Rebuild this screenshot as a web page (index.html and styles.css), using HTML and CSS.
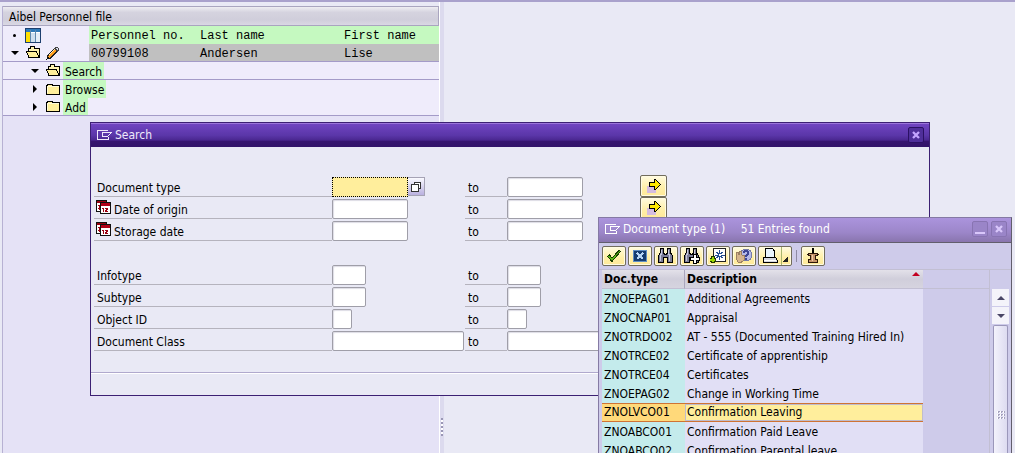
FILE: index.html
```html
<!DOCTYPE html>
<html lang="en">
<head>
<meta charset="utf-8">
<title>Aibel Personnel file</title>
<link rel="stylesheet" href="styles.css">
</head>
<body>
<svg class="defs" width="0" height="0" aria-hidden="true">
  <symbol id="window-mark" viewBox="0 0 16 12"><path d="M11 1.500H.5V10.500H11V7.500M5.500 7.500V3.500H14.500L10.500 7.500H5" fill="none" stroke="currentColor"/></symbol>
  <symbol id="folder-closed" viewBox="0 0 15 13"><path d="M.5 2.500H1.500V1.500H6.500V2.500H13.500V11.500H.5Z" fill="#ffef9b" stroke="#000"/><path d="M1.500 10V3.500H12.500" fill="none" stroke="#fffbd8"/></symbol>
  <symbol id="folder-open" viewBox="0 0 15 13"><path d="M2.500 5V2.500H4.500V.5H8.500V2.500H13.500V11.500H2.500" fill="#fff3b0" stroke="#000"/><path d="M.5 5.500H10.500L13 11.500H3Z" fill="#ffef9b" stroke="#000"/></symbol>
  <symbol id="calendar" viewBox="0 0 15 14"><path d="M.5.500H10.500V11.500H.5Z" fill="#fff" stroke="#111"/><path d="M1 1H10V3H1Z" fill="#9a0010"/><path d="M2 5.500H4M3.500 5V10M2 8.500H4" stroke="#9a0010"/><path d="M4.500 2.500H14.500V13.500H4.500Z" fill="#fff" stroke="#111"/><path d="M5 3H14V6H5Z" fill="#b00018"/><path d="M6 8.500H7.500V12M9 8.500H11.500V9.500H10.500V10.500H9.500V11.500H12" fill="none" stroke="#9a0010"/></symbol>
  <symbol id="arrow-multi" viewBox="0 0 16 16"><path d="M1 8H10V15H1Z" fill="#d4bce0"/><path d="M3.500 4.500H8.500V1.500H9.500L14.500 6.500 9.500 11.500H8.500V8.500H3.500Z" fill="#ffe800" stroke="#000"/></symbol>
  <symbol id="close" viewBox="0 0 8 8"><path d="M1 1 7 7M7 1 1 7" stroke="currentColor" stroke-width="2.300"/></symbol>
  <symbol id="binoculars" viewBox="0 0 16 16"><path d="M2.500.500H5.500V4.500L6.500 6.500H8.500L9.500 4.500V.5H12.500V4.500L14.500 8V14.500H9.500V9.500H5.500V14.500H.5V8L2.500 4.500Z" fill="#7c7d98" stroke="#000"/><path d="M3.500 2V5L2.500 8V13M10.500 2V5L11.500 8V13" fill="none" stroke="#c6c8dc"/></symbol>
</svg>

<main class="desktop">
  <section class="tree-panel">
    <h1 class="tree-title">Aibel Personnel file</h1>
    <div class="tree-row">
      <div class="tree-node"><span class="dot"></span>
        <svg class="icon-table" width="17" height="15" viewBox="0 0 17 15"><path d="M.5.500H15.500V14.500H.5Z" fill="#fff" stroke="#1d3f6e"/><path d="M1 1H15V4H1Z" fill="#2f7ab8"/><path d="M1 4H5V14H1Z" fill="#ffdf00"/><path d="M6 5H10V14H6Z" fill="#cfe0ef"/><path d="M11 5H15V14H11Z" fill="#e5eef7"/><path d="M5.500 2V14M10.500 2V14" stroke="#5f88ad"/></svg>
      </div>
      <div class="tree-data head"><span>Personnel no.</span><span>Last name</span><span>First name</span></div>
    </div>
    <div class="tree-row ruled">
      <div class="tree-node"><span class="caret down"></span>
        <svg width="15" height="13"><use href="#folder-open"/></svg>
        <svg class="icon-pencil" width="14" height="14" viewBox="0 0 14 14"><path d="M1 13 2 9.500 9.500 2 12 4.500 4.500 12Z" fill="#ff9e1b" stroke="#222"/><path d="M2.500 9.500 9.500 2.500" stroke="#ffe2a8"/><path d="M9 2.500 11 .8 13.200 3 11.500 5Z" fill="#d9dcec" stroke="#444"/><path d="M0 14 1.500 10.500 3.500 12.500Z" fill="#111"/></svg>
      </div>
      <div class="tree-data selected"><span>00799108</span><span>Andersen</span><span>Lise</span></div>
    </div>
    <div class="tree-row child ruled"><span class="caret down"></span><svg width="15" height="13"><use href="#folder-open"/></svg><button class="tree-label">Search</button></div>
    <div class="tree-row child"><span class="caret right"></span><svg width="15" height="13"><use href="#folder-closed"/></svg><button class="tree-label">Browse</button></div>
    <div class="tree-row child ruled"><span class="caret right"></span><svg width="15" height="13"><use href="#folder-closed"/></svg><button class="tree-label">Add</button></div>
  </section>
  <div class="splitter"><span class="grip"></span></div>
  <div class="work-area"></div>
</main>

<section class="window search-window" aria-label="Search">
  <header class="titlebar">
    <svg width="16" height="12"><use href="#window-mark"/></svg>
    <h2>Search</h2>
    <button class="win-button" aria-label="Close"><svg width="8" height="8"><use href="#close"/></svg></button>
  </header>
  <form class="criteria">
    <div class="criterion">
      <label class="name" for="doctype">Document type</label>
      <div class="from"><input id="doctype" class="date focused"><button type="button" class="match" aria-label="Possible entries"><svg width="12" height="12" viewBox="0 0 12 12"><path d="M4.500 1.500H10.500V7.500H4.500Z" fill="#fff" stroke="#333"/><path d="M1.500 3.500H8.500V10.500H1.500Z" fill="#fff" stroke="#333"/></svg></button></div>
      <label class="to" for="doctype-to">to</label>
      <div class="until"><input id="doctype-to" class="date"></div>
      <button type="button" class="gold multi" aria-label="Multiple selection for document type"><svg width="16" height="16"><use href="#arrow-multi"/></svg></button>
    </div>
    <div class="criterion">
      <label class="name with-icon" for="origin"><svg width="15" height="14"><use href="#calendar"/></svg>Date of origin</label>
      <div class="from"><input id="origin" class="date"></div>
      <label class="to" for="origin-to">to</label>
      <div class="until"><input id="origin-to" class="date"></div>
      <button type="button" class="gold multi" aria-label="Multiple selection for date of origin"><svg width="16" height="16"><use href="#arrow-multi"/></svg></button>
    </div>
    <div class="criterion">
      <label class="name with-icon" for="storage"><svg width="15" height="14"><use href="#calendar"/></svg>Storage date</label>
      <div class="from"><input id="storage" class="date"></div>
      <label class="to" for="storage-to">to</label>
      <div class="until"><input id="storage-to" class="date"></div>
    </div>
    <div class="criterion group-start">
      <label class="name" for="infotype">Infotype</label>
      <div class="from"><input id="infotype" class="short"></div>
      <label class="to" for="infotype-to">to</label>
      <div class="until"><input id="infotype-to" class="short"></div>
    </div>
    <div class="criterion">
      <label class="name" for="subtype">Subtype</label>
      <div class="from"><input id="subtype" class="short"></div>
      <label class="to" for="subtype-to">to</label>
      <div class="until"><input id="subtype-to" class="short"></div>
    </div>
    <div class="criterion">
      <label class="name" for="object">Object ID</label>
      <div class="from"><input id="object" class="tiny"></div>
      <label class="to" for="object-to">to</label>
      <div class="until"><input id="object-to" class="tiny"></div>
    </div>
    <div class="criterion">
      <label class="name" for="class">Document Class</label>
      <div class="from"><input id="class" class="long"></div>
      <label class="to" for="class-to">to</label>
      <div class="until"><input id="class-to" class="long"></div>
    </div>
  </form>
  <footer class="window-footer"></footer>
</section>

<section class="window list-window" aria-label="Document type">
  <header class="titlebar">
    <svg width="16" height="12"><use href="#window-mark"/></svg>
    <h2>Document type (1) <span class="count">51 Entries found</span></h2>
    <button class="win-button" aria-label="Minimize"><span class="dash"></span></button>
    <button class="win-button" aria-label="Close"><svg width="8" height="8"><use href="#close"/></svg></button>
  </header>
  <div class="toolbar">
    <button class="gold" aria-label="Continue"><svg width="16" height="16" viewBox="0 0 16 16"><path d="M1.500 8.500 3.500 7 6 10 13 2.500 14.500 3.500 6 13.500Z" fill="#5cb615" stroke="#173d00"/></svg></button>
    <button class="gold" aria-label="Cancel"><svg width="16" height="16" viewBox="0 0 16 16"><path d="M1.500 2.500H14.500V13.500H1.500Z" fill="#153d70" stroke="#5f8fc4"/><path d="M5 5 11 11M11 5 5 11" stroke="#b5d6f5" stroke-width="2"/></svg></button>
    <button class="gold" aria-label="Find"><svg width="16" height="16"><use href="#binoculars"/></svg></button>
    <button class="gold" aria-label="Find next"><svg width="16" height="16" viewBox="0 0 16 16"><use href="#binoculars" width="16" height="16"/><path d="M9.500 6.500H12.500V9.500H15.500V12.500H12.500V15.500H9.500V12.500H6.500V9.500H9.500Z" fill="#fff" stroke="#000"/></svg></button>
    <button class="gold" aria-label="Add to favorites"><svg width="16" height="16" viewBox="0 0 16 16"><path d="M3.500.500H15.500V13.500H3.500Z" fill="#fff" stroke="#222"/><path d="M9.500 2V12M5 7H14.500M6.500 4 12.500 10M12.500 4 6.500 10" stroke="#244f91"/><path d="M9 6H11V8H9Z" fill="#fff"/><path d="M2.500 8V15M-1 11.500H6" stroke="#213800" stroke-width="4"/><path d="M2.500 9V14M0 11.500H5" stroke="#9bd800" stroke-width="2"/></svg></button>
    <button class="gold" aria-label="Help"><svg width="18" height="16" viewBox="0 0 18 16"><circle cx="11" cy="7" r="6" fill="#b5b9e7" stroke="#777ba8"/><path d="M8.500 5Q9 3 11 3T13 5.500Q13 6.500 11 7.500V9M11 10V12" fill="none" stroke="#3e4694" stroke-width="2"/><path d="M1 5 3 4 4 7 4.500 3 6 3 6.500 7 9 7.500 9 12 6.500 14H3L1 10Z" fill="#d6b58c" stroke="#9c8062"/></svg></button>
    <button class="gold split" aria-label="Print"><svg width="16" height="16" viewBox="0 0 16 16"><path d="M3.500.500H10.500L12.500 3V9.500H3.500Z" fill="#e9f4fd" stroke="#000"/><path d="M1.500 9.500H13.500L15 12V14.500H1V11Z" fill="#d5d7df" stroke="#000"/><path d="M2 12H14" stroke="#fff"/></svg><span class="corner"></span></button>
    <span class="separator"></span>
    <button class="gold" aria-label="Hold list"><svg width="14" height="16" viewBox="0 0 14 16"><path d="M7 0V6" stroke="#000" stroke-width="2"/><path d="M2.500 5.500H11.500V7.500H9.500V11.500H11.500V14.500H2.500V11.500H4.500V7.500H2.500Z" fill="#c6936b" stroke="#2b1708"/><path d="M1 6.500H3M11 6.500H13" stroke="#2b1708"/><path d="M6.500 7V13" stroke="#efcba8"/></svg></button>
  </div>
  <div class="list-body">
    <div class="table-area">
      <table>
        <thead><tr><th class="code">Doc.type</th><th>Description<span class="sort"></span></th></tr></thead>
        <tbody>
          <tr><td>ZNOEPAG01</td><td>Additional Agreements</td></tr>
          <tr><td>ZNOCNAP01</td><td>Appraisal</td></tr>
          <tr><td>ZNOTRDO02</td><td>AT - 555 (Documented Training Hired In)</td></tr>
          <tr><td>ZNOTRCE02</td><td>Certificate of apprentiship</td></tr>
          <tr><td>ZNOTRCE04</td><td>Certificates</td></tr>
          <tr><td>ZNOEPAG02</td><td>Change in Working Time</td></tr>
          <tr class="current"><td>ZNOLVCO01</td><td>Confirmation Leaving</td></tr>
          <tr><td>ZNOABCO01</td><td>Confirmation Paid Leave</td></tr>
          <tr><td>ZNOABCO02</td><td>Confirmation Parental leave</td></tr>
        </tbody>
      </table>
    </div>
    <div class="scrollbar">
      <button aria-label="Scroll up"><span class="tip up"></span></button>
      <button aria-label="Scroll down"><span class="tip"></span></button>
      <div class="thumb"><span class="thumb-grip"></span></div>
    </div>
  </div>
</section>
</body>
</html>
```
FILE: styles.css
```css
* { box-sizing: border-box; }

body {
  margin: 0;
  height: 100vh;
  overflow: hidden;
  position: relative;
  background: #e9e9f5;
  color: #000;
  font: 12px/18px "DejaVu Sans Condensed", "DejaVu Sans", sans-serif;
}

button, input { font: inherit; color: inherit; margin: 0; padding: 0; }
h1, h2 { margin: 0; font-size: inherit; font-weight: normal; }
svg { display: block; flex: none; shape-rendering: crispEdges; }
.defs { position: absolute; }

/* Desktop */
.desktop {
  display: flex;
  height: 100%;
  border-top: 2px solid #a9a1cc;
  padding-left: 2px;
}
.tree-panel {
  flex: 0 0 437px;
  margin-top: 4px;
  border-left: 1px solid #b7b1d3;
  background: #e5e2f6;
}
.tree-title {
  height: 20px;
  padding-left: 6px;
  line-height: 20px;
  border: solid #a9a5bf;
  border-width: 1px 1px 1px 0;
  background: linear-gradient(#eeedf2, #d5d3df 30%, #d0cedb 70%, #dad8e4);
}
.tree-row { display: flex; height: 18px; background: #efecfb; }
.tree-row.ruled { border-bottom: 1px solid #a49bc8; }
.tree-node { flex: 0 0 86px; display: flex; align-items: center; padding-left: 8px; gap: 5px; }
.dot { flex: none; width: 3px; height: 3px; margin: 0 4px 0 2px; border-radius: 2px; background: #000; }
.caret { flex: none; border: solid transparent; }
.caret.down { width: 8px; border-width: 4px 4px 0; border-top-color: #000; margin-right: 2px; }
.caret.right { border-width: 4px 0 4px 4px; border-left-color: #000; margin: 0 4px 0 2px; }
.tree-data {
  flex: 1;
  display: grid;
  grid-template-columns: 109px 144px 1fr;
  padding-left: 2px;
  font-family: "Liberation Mono", monospace;
  line-height: 20px;
}
.tree-data.head { background: #c5f9c0; }
.tree-data.selected { background: #c0c0c0; }
.tree-row.child { align-items: center; padding-left: 28px; gap: 5px; }
.tree-row.child svg { margin-right: -3px; }
.tree-label { height: 100%; padding: 2px 2px 0; border: 0; background: #c5f9c0; line-height: 16px; }
.splitter {
  flex: 0 0 5px;
  display: flex;
  align-items: flex-end;
  border-left: 1px solid #fff;
  background: #dcdaee;
}
.grip { width: 2px; height: 18px; margin: 0 0 17px 1px; background: repeating-linear-gradient(#9a97b5 0 2px, #fff 2px 4px); }
.work-area { flex: 1; }

/* Windows */
.window { position: absolute; display: flex; flex-direction: column; }
.titlebar { display: flex; align-items: center; gap: 2px; padding: 0 5px 2px 6px; color: #efe9fb; }
.titlebar h2 { flex: 1; }
.win-button {
  display: grid;
  place-items: center;
  width: 16px;
  height: 16px;
  border: 1px solid #2b1164;
  border-radius: 2px;
  background: #4f2f9a;
  color: #c3a5ff;
}
.win-button svg { shape-rendering: auto; }

.search-window { left: 90px; top: 122px; width: 840px; border: 1px solid #3c2073; background: #e9e9f5; }
.search-window .titlebar {
  height: 24px;
  border-top: 1px solid #9b74da;
  background: linear-gradient(#7044c1, #5a36a8 50%, #4a2790 70%, #36156f 75%, #32136a);
}
.criteria { padding: 28px 3px 21px; }
.criterion {
  display: grid;
  grid-template-columns: 238px 133px 42px 133px auto;
  height: 22px;
  align-items: end;
  justify-content: start;
}
.criterion.group-start { margin-top: 22px; }
.name, .to { height: 19px; padding-left: 3px; border-bottom: 1px solid #b5b3bd; line-height: 20px; }
.name.with-icon { display: flex; gap: 3px; padding-left: 2px; }
.from, .until { display: flex; min-width: 0; }
input {
  height: 20px;
  border: 1px solid #9f9ea8;
  border-radius: 2px;
  background: #fff;
  box-shadow: inset 1px 1px 1px #dddce5;
}
input.date { width: 76px; }
input.short { width: 34px; }
input.tiny { width: 20px; }
input.long { width: 132px; flex: none; }
input.focused { border: 1px dotted #000; border-radius: 0; background: #ffee9c; box-shadow: none; outline: 0; }
.match {
  display: grid;
  place-items: center;
  width: 17px;
  height: 19px;
  border: 1px solid #a6a3b5;
  border-left: 0;
  background: linear-gradient(#fafaff, #b9b0df);
}
.window-footer { height: 23px; border-top: 1px solid #b0a9cd; box-shadow: inset 0 1px #fff; }

.gold {
  display: grid;
  place-items: center;
  width: 24px;
  height: 20px;
  border: 1px solid #716c5c;
  border-radius: 2px;
  background: linear-gradient(#fffbe0, #ffefa6 60%, #ffe99a);
  box-shadow: inset 0 0 0 1px #fffbe2;
}
.gold.multi { width: 27px; height: 22px; }

/* Value list */
.list-window {
  left: 598px;
  top: 217px;
  bottom: 0;
  width: 414px;
  border: 1px solid #857aa4;
  border-right-color: #625e6c;
  border-bottom: 0;
  background: #cecbea;
  overflow: hidden;
}
.list-window .titlebar {
  flex: none;
  height: 25px;
  padding-right: 4px;
  border-bottom: 1px solid #625e6c;
  background: linear-gradient(#ab94dd, #9c86c9 60%, #8975ae);
  color: #fff;
}
.list-window .win-button { border-color: #8874b2; background: #9a85c8; color: #d9c7fb; }
.list-window .win-button + .win-button { margin-left: 1px; }
.count { margin-left: 12px; }
.dash { width: 10px; height: 2px; margin-top: 8px; background: #d9c7fb; }
.toolbar {
  flex: none;
  display: flex;
  align-items: center;
  gap: 2px;
  height: 27px;
  padding-left: 3px;
  border-bottom: 1px solid #c2bfd3;
}
.gold.split { width: 34px; grid-template-columns: 22px 1fr; }
.corner {
  align-self: stretch;
  width: 100%;
  border-left: 1px solid #a9b66e;
  background: linear-gradient(135deg, transparent 50%, #222 50%) no-repeat right 3px bottom 3px / 5px 5px;
}
.separator { width: 1px; height: 12px; margin: 0 2px; background: #8e8aa5; }
.list-body { flex: 1; min-height: 0; display: flex; gap: 2px; padding: 0 2px 0 3px; }
.table-area { flex: 1; overflow: hidden; border-right: 1px solid #c2bfd3; background: linear-gradient(#c2bfd3, #c2bfd3) no-repeat 0 18px / 100% 1px; }
table { border-collapse: separate; border-spacing: 0; table-layout: fixed; width: 321px; }
th, td { height: 19px; padding: 0 2px; text-align: left; white-space: nowrap; overflow: hidden; }
th {
  border-bottom: 1px solid #c2bfd3;
  background: linear-gradient(#e3e1e9, #d0cedb 50%, #d6d4df);
  font-weight: bold;
}
th.code { width: 83px; border-right: 1px solid #aaa6bd; }
td { background: #e1dff5; }
td:first-child { background: #c4ebec; }
.sort { float: right; margin: 2px 1px; border: solid transparent; border-width: 0 4px 4px; border-bottom-color: #c30020; }
.current td { border: solid #cf7334; border-width: 1px 0; background: #ffee9c; line-height: 17px; box-shadow: inset 0 0 0 1px #c0bccb; }
.current td:first-child { background: #ffd97a; box-shadow: none; }
.scrollbar { flex: 0 0 17px; display: flex; flex-direction: column; gap: 1px; margin-top: 19px; }
.scrollbar button { display: grid; place-items: center; height: 17px; border: 0; background: #f4f3fa; }
.tip { border: solid transparent; border-width: 4px 4px 0; border-top-color: #4a4666; }
.tip.up { transform: rotate(180deg); }
.thumb {
  flex: 1;
  display: flex;
  justify-content: center;
  margin: 0 1px;
  padding-top: 85px;
  border: 1px solid #9b97ba;
  border-bottom: 0;
  border-radius: 2px 2px 0 0;
  background: linear-gradient(90deg, #f3f2fc, #dddbf0);
}
.thumb-grip { width: 8px; height: 9px; background: conic-gradient(#a5a2bd 25%, transparent 0 75%, #fff 0) 0 0 / 3px 3px; }
```
